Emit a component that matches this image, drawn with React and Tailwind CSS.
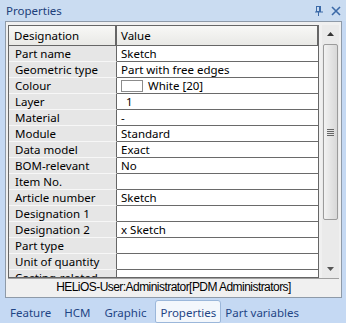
import React from "react";

const rows = [
  ["Part name", "Sketch"],
  ["Geometric type", "Part with free edges"],
  ["Colour", "__colour"],
  ["Layer", "__layer"],
  ["Material", "-"],
  ["Module", "Standard"],
  ["Data model", "Exact"],
  ["BOM-relevant", "No"],
  ["Item No.", ""],
  ["Article number", "Sketch"],
  ["Designation 1", ""],
  ["Designation 2", "x Sketch"],
  ["Part type", ""],
  ["Unit of quantity", ""],
  ["Costing-related", ""],
];

function Value({ v }) {
  if (v === "__colour")
    return (
      <div className="flex items-center h-full pl-[4px]">
        <div className="w-[22px] h-[12px] bg-white border border-[#8c8c8c]" />
        <span className="ml-[5px]">White [20]</span>
      </div>
    );
  if (v === "__layer")
    return <div className="pl-[9px] h-full flex items-center">1</div>;
  return <div className="pl-[4px] h-full flex items-center">{v}</div>;
}

export default function App() {
  return (
    <div
      className="w-[346px] h-[323px] bg-[#c5d9f3] flex flex-col overflow-hidden text-[11.5px] text-black"
      style={{ fontFamily: '"Noto Sans", sans-serif' }}
    >
      {/* title bar */}
      <div className="h-[21px] shrink-0 bg-[#cadcf1] flex items-center justify-between pl-[6px] pr-[5px]">
        <span className="text-[#20407a] text-[11.5px]">Properties</span>
        <div className="flex items-center gap-[7px] text-[#3c6aa8]">
          <svg width="10" height="11" viewBox="0 0 10 11">
            <rect x="2.5" y="1.5" width="4" height="5" fill="none" stroke="#3c6aa8" />
            <rect x="5" y="2" width="1" height="4" fill="#3c6aa8" />
            <rect x="1" y="6.5" width="8" height="1" fill="#3c6aa8" />
            <rect x="4" y="7" width="1" height="4" fill="#3c6aa8" />
          </svg>
          <svg width="10" height="10" viewBox="0 0 10 10">
            <path d="M1 1 L9 9 M9 1 L1 9" stroke="#3c6aa8" strokeWidth="1.6" />
          </svg>
        </div>
      </div>

      {/* frame */}
      <div className="ml-[5px] mr-[4px] h-[277px] shrink-0 border border-[#8e9aa8] bg-[#f0f0f0] flex flex-col">
        <div className="flex h-[256px] pl-[2px] pt-[3px] pr-[2px]">
          {/* grid */}
          <div className="w-[312px] h-[253px] border-l border-t border-b border-[#666] overflow-hidden bg-white">
            <div className="flex h-[20px] bg-[#f0f0ee] border-b border-[#666]">
              <div className="w-[108px] border-r-2 border-[#666] pl-[5px] flex items-center bg-gradient-to-b from-[#f8f8f6] to-[#e9e9e6]">
                Designation
              </div>
              <div className="flex-1 border-r-2 border-[#666] pl-[4px] flex items-center bg-gradient-to-b from-[#f8f8f6] to-[#e9e9e6]">
                Value
              </div>
            </div>
            {rows.map(([k, v], i) => (
              <div key={i} className="flex h-[16px]">
                <div className="w-[108px] bg-[#e6e6e6] border-b border-[#f7f7f7] border-r border-r-[#666] pl-[6px] flex items-center whitespace-nowrap">
                  {k}
                </div>
                <div className="flex-1 border-b border-[#6a6a6a] border-r border-r-[#666] whitespace-nowrap">
                  <Value v={v} />
                </div>
              </div>
            ))}
          </div>
          {/* scrollbar */}
          <div className="ml-[3px] w-[17px] h-[253px] bg-[#eaeaea] flex flex-col">
            <div className="h-[18px] flex items-center justify-center">
              <svg width="7" height="4" viewBox="0 0 7 4"><path d="M0 4 L3.5 0 L7 4 Z" fill="#333" /></svg>
            </div>
            <div className="h-[176px] mx-[1px] mt-[1px] rounded-[2px] border border-[#9b9b9b] bg-gradient-to-r from-[#f2f2f2] to-[#d8d8d8] flex items-center justify-center">
              <div className="flex flex-col gap-[1px]">
                <div className="w-[7px] h-[1px] bg-[#666]" />
                <div className="w-[7px] h-[1px] bg-[#666]" />
                <div className="w-[7px] h-[1px] bg-[#666]" />
                <div className="w-[7px] h-[1px] bg-[#666]" />
              </div>
            </div>
            <div className="flex-1" />
            <div className="h-[18px] flex items-center justify-center">
              <svg width="7" height="4" viewBox="0 0 7 4"><path d="M0 0 L3.5 4 L7 0 Z" fill="#555" /></svg>
            </div>
          </div>
        </div>
        {/* status */}
        <div className="mx-[2px] h-[17px] border-t border-[#a0a0a0] flex items-center justify-center">
          <span
            className="text-[12px] tracking-[-0.55px] text-black"
            style={{ fontFamily: '"Liberation Sans", sans-serif' }}
          >
            HELiOS-User:Administrator[PDM Administrators]
          </span>
        </div>
      </div>

      {/* tabs */}
      <div className="flex-1 flex items-start pt-[2px] text-[#1f4585]">
        <div className="pl-[10px] pt-[4px]">Feature</div>
        <div className="pl-[13px] pt-[4px]">HCM</div>
        <div className="pl-[14px] pt-[4px]">Graphic</div>
        <div className="ml-[9px] h-[23px] px-[4px] pt-[3px] bg-[#f3f7fc] border border-[#9bb7da] rounded-t-[3px] rounded-b-[2px]">
          Properties
        </div>
        <div className="pl-[4px] pt-[4px]">Part variables</div>
      </div>
    </div>
  );
}
